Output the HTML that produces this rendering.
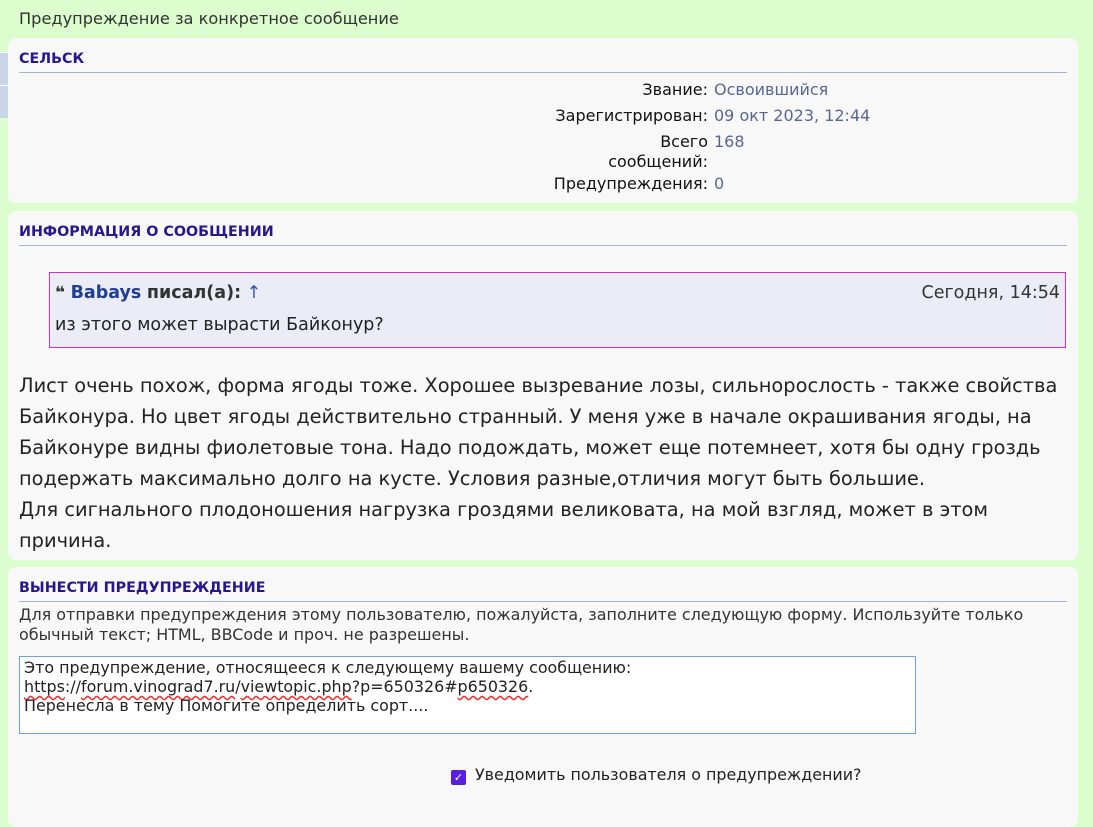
<!DOCTYPE html>
<html><head><meta charset="utf-8"><style>
*{margin:0;padding:0;box-sizing:border-box}
body{width:1093px;height:800px;overflow:hidden;background:#dcfdcd;font-family:"DejaVu Sans","Liberation Sans",sans-serif;color:#222;position:relative}
.t{position:absolute;left:19px;top:9px;font-size:16.2px;color:#333}
.strip{position:absolute;left:0;top:52px;width:8px;height:66px;background:#c9d6ea;border-top:1px solid #fff}
.strip:after{content:"";position:absolute;left:0;top:32px;width:8px;height:1px;background:#fff}
.p{position:absolute;left:8px;width:1070px;background:#f8f8f8;border-radius:8px}
.h{position:absolute;left:11px;right:11px;top:13px;font-size:14.3px;font-weight:bold;color:#2a168c;border-bottom:1px solid #a6b2cf;padding-bottom:3px;height:22px}
.row{position:absolute;font-size:16px;line-height:20px}
.l{position:absolute;right:370px;text-align:right;color:#111}
.v{position:absolute;left:706px;color:#5b6593}
.q{position:absolute;left:41px;top:61px;width:1017px;height:76px;background:#ececf7;border:1px solid #d02fd5;font-family:"DejaVu Sans",sans-serif;font-size:17.5px}
.body{position:absolute;left:11px;top:159px;font-size:19.4px;line-height:31px;color:#222;width:1060px}
.s{position:absolute;left:11px;top:38px;font-size:15.95px;line-height:20px;color:#333;width:1045px}
.ta{position:absolute;left:11px;top:89px;width:897px;height:78px;background:#fff;border:1px solid #6fa0d8;font-size:15.9px;line-height:19px;padding:1px 4px;color:#222}
.sq{text-decoration:underline wavy #e33;text-underline-offset:3px}
</style></head><body>
<div class="t">Предупреждение за конкретное сообщение</div>
<div class="strip"></div>
<div class="p" style="top:38px;height:165px">
 <div class="h">СЕЛЬСК</div>
 <div class="l row" style="top:42px">Звание:</div><div class="v row" style="top:42px">Освоившийся</div>
 <div class="l row" style="top:68px">Зарегистрирован:</div><div class="v row" style="top:68px">09 окт 2023, 12:44</div>
 <div class="l row" style="top:94px">Всего<br>сообщений:</div><div class="v row" style="top:94px">168</div>
 <div class="l row" style="top:136px">Предупреждения:</div><div class="v row" style="top:136px">0</div>
</div>
<div class="p" style="top:211px;height:349px">
 <div class="h">ИНФОРМАЦИЯ О СООБЩЕНИИ</div>
 <div class="q">
  <div style="position:absolute;left:5px;top:10px"><b style="color:#333;font-size:17px">❝</b> <b style="color:#1f3e8f">Babays</b> <b style="color:#333">писал(а):</b> <span style="color:#3355bb">↑</span></div>
  <div style="position:absolute;right:5px;top:10px;color:#333">Сегодня, 14:54</div>
  <div style="position:absolute;left:5px;top:42px;color:#222">из этого может вырасти Байконур?</div>
 </div>
 <div class="body">Лист очень похож, форма ягоды тоже. Хорошее вызревание лозы, сильнорослость - также свойства Байконура. Но цвет ягоды действительно странный. У меня уже в начале окрашивания ягоды, на Байконуре видны фиолетовые тона. Надо подождать, может еще потемнеет, хотя бы одну гроздь подержать максимально долго на кусте. Условия разные,отличия могут быть большие.<br>Для сигнального плодоношения нагрузка гроздями великовата, на мой взгляд, может в этом причина.</div>
</div>
<div class="p" style="top:567px;height:260px">
 <div class="h">ВЫНЕСТИ ПРЕДУПРЕЖДЕНИЕ</div>
 <div class="s">Для отправки предупреждения этому пользователю, пожалуйста, заполните следующую форму. Используйте только обычный текст; HTML, BBCode и проч. не разрешены.</div>
 <div class="ta">Это предупреждение, относящееся к следующему вашему сообщению:<br><span class="sq">https</span>://<span class="sq">forum.vinograd7.ru</span>/<span class="sq">viewtopic.php</span>?p=650326#<span class="sq">p650326</span>.<br>Перенесла в тему Помогите определить сорт....</div>
 <div style="position:absolute;left:443px;top:198px;font-size:15.9px;color:#222"><span style="display:inline-block;width:15px;height:15px;background:#5a1ee0;border-radius:2px;color:#fff;font-size:11px;line-height:15px;text-align:center;vertical-align:-1px;margin-right:9px">✓</span>Уведомить пользователя о предупреждении?</div>
</div>
</body></html>
